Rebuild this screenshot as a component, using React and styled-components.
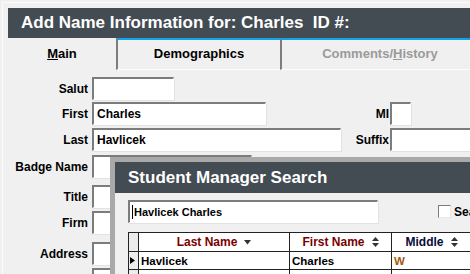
import React from "react";
import styled, { createGlobalStyle } from "styled-components";

const GlobalStyle = createGlobalStyle`
  html, body { margin: 0; padding: 0; background: #f0f0f0; overflow: hidden; }
  * { box-sizing: border-box; }
`;

const FONT = `"Liberation Sans", Arial, sans-serif`;

const Frame = styled.div`
  position: relative;
  width: 470px;
  height: 274px;
  overflow: hidden;
  background: #f0f0f0;
  padding: 8px 0 0 8px;
  font-family: ${FONT};
  box-shadow: inset 2px 2px 0 #f0f0f0, inset 3px 3px 0 #fbfbfb;
`;

const Window = styled.div`
  display: flex;
  flex-direction: column;
  width: 470px;
`;

const TitleBar = styled.div`
  display: flex;
  align-items: center;
  flex-shrink: 0;
  height: ${(p) => p.$h}px;
  padding-left: ${(p) => p.$pad}px;
  background: #434b53;
  color: #fff;
  font-weight: bold;
  font-size: 17px;
  white-space: pre;
`;

const TabStrip = styled.div`
  display: flex;
  height: 32px;
`;

const Tab = styled.div`
  display: flex;
  align-items: center;
  justify-content: center;
  flex-shrink: 0;
  width: ${(p) => p.$w}px;
  font-size: 13px;
  font-weight: bold;
  color: ${(p) => (p.$dim ? "#9a9a9a" : "#000")};
  border-top: 2px solid ${(p) => (p.$active ? "transparent" : "#12a3e8")};
  border-left: ${(p) => (p.$active ? "0" : "2px solid #7d7d7d")};
  border-bottom: 1px solid ${(p) => (p.$active ? "transparent" : "#fdfdfd")};
  padding-bottom: 2px;
  u { text-decoration: underline; }
`;

const FormBody = styled.div`
  display: flex;
  flex-direction: column;
  padding-top: 7px;
`;

const FieldRow = styled.div`
  display: flex;
  align-items: center;
  height: 23px;
  margin-top: ${(p) => p.$mt}px;
`;

const Label = styled.div`
  flex-shrink: 0;
  width: ${(p) => p.$w}px;
  padding-right: ${(p) => p.$pr}px;
  text-align: right;
  font-size: 12px;
  font-weight: bold;
  color: #000;
  white-space: nowrap;
`;

const Input = styled.div`
  flex-shrink: 0;
  width: ${(p) => p.$w}px;
  height: 23px;
  background: #fff;
  border-style: solid;
  border-width: 2px 1px 1px 2px;
  border-color: #7c7c7c #ffffff #ffffff #7c7c7c;
  box-shadow: 1px 1px 0 #e2e2e2;
  font-size: 12px;
  font-weight: bold;
  padding-left: 3px;
  display: flex;
  align-items: center;
  white-space: nowrap;
  overflow: hidden;
`;

const Dialog = styled.div`
  position: absolute;
  left: 110px;
  top: 157px;
  width: 400px;
  height: 130px;
  background: #f0f0f0;
  border-left: 5px solid #a9a9a9;
  border-top: 5px solid #a9a9a9;
  display: flex;
  flex-direction: column;
`;

const DialogBody = styled.div`
  display: flex;
  flex-direction: column;
  align-items: flex-start;
  padding: 7px 0 0 13px;
`;

const SearchRow = styled.div`
  display: flex;
  align-items: center;
  height: 23px;
`;

const SearchBox = styled(Input)`
  width: 250px;
  padding-left: 2px;
  font-size: 11px;
`;

const Caret = styled.span`
  display: inline-block;
  width: 1px;
  height: 14px;
  background: #000;
  margin-right: 1px;
`;

const CheckBox = styled.div`
  flex-shrink: 0;
  width: 13px;
  height: 13px;
  margin-left: 60px;
  background: #fff;
  border-style: solid;
  border-width: 1px;
  border-color: #7c7c7c #e8e8e8 #e8e8e8 #7c7c7c;
`;

const CheckText = styled.span`
  flex-shrink: 0;
  margin-left: 3px;
  font-size: 12px;
  font-weight: bold;
  white-space: nowrap;
`;

const Grid = styled.table`
  margin-top: 9px;
  border-collapse: collapse;
  table-layout: fixed;
  width: 420px;
  flex-shrink: 0;
  background: #fff;
`;

const HeadCell = styled.th`
  width: ${(p) => p.$w}px;
  height: 19px;
  padding: 0;
  border: 1px solid #222;
  font-size: 12px;
  font-weight: bold;
  color: ${(p) => p.$color || "#7a0000"};
  text-align: center;
  white-space: nowrap;
  background: ${(p) => (p.$gutter ? "#ececec" : "#fff")};
`;

const Cell = styled.td`
  height: 18px;
  padding: 0 0 0 2px;
  border: 1px solid #222;
  font-size: 11.5px;
  font-weight: bold;
  color: ${(p) => p.$color || "#000"};
  white-space: nowrap;
  overflow: hidden;
  background: ${(p) => (p.$gutter ? "#ececec" : "#fff")};
`;

const HeadInner = styled.span`
  display: inline-flex;
  align-items: center;
  gap: 7px;
`;

const SortDown = () => (
  <svg width="7" height="5" viewBox="0 0 7 5">
    <path d="M0 0 L7 0 L3.5 4.5 Z" fill="#333" />
  </svg>
);

const SortBoth = () => (
  <svg width="7" height="10" viewBox="0 0 7 10">
    <path d="M0 4 L7 4 L3.5 0 Z M0 6 L7 6 L3.5 10 Z" fill="#333" />
  </svg>
);

const RowMark = () => (
  <svg width="5" height="7" viewBox="0 0 5 7" style={{ display: "block", marginLeft: 1 }}>
    <path d="M0 0 L5 3.5 L0 7 Z" fill="#000" />
  </svg>
);

export default function App() {
  return (
    <>
      <GlobalStyle />
      <Frame>
        <Window>
          <TitleBar $h={30} $pad={13}>
            {"Add Name Information for: Charles  ID #:"}
          </TitleBar>
          <TabStrip>
            <Tab $w={108} $active>
              <span><u>M</u>ain</span>
            </Tab>
            <Tab $w={164}>Demographics</Tab>
            <Tab $w={198} $dim>
              <span>Comments/<u>H</u>istory</span>
            </Tab>
          </TabStrip>
          <FormBody>
            <FieldRow $mt={0}>
              <Label $w={84} $pr={4}>Salut</Label>
              <Input $w={82} />
            </FieldRow>
            <FieldRow $mt={2}>
              <Label $w={84} $pr={4}>First</Label>
              <Input $w={174}>Charles</Input>
              <Label $w={124} $pr={1}>MI</Label>
              <Input $w={21} />
            </FieldRow>
            <FieldRow $mt={3}>
              <Label $w={84} $pr={4}>Last</Label>
              <Input $w={249}>Havlicek</Input>
              <Label $w={49} $pr={1}>Suffix</Label>
              <Input $w={100} />
            </FieldRow>
            <FieldRow $mt={4}>
              <Label $w={84} $pr={4}>Badge Name</Label>
              <Input $w={160} />
            </FieldRow>
            <FieldRow $mt={7}>
              <Label $w={84} $pr={4}>Title</Label>
              <Input $w={160} />
            </FieldRow>
            <FieldRow $mt={3}>
              <Label $w={84} $pr={4}>Firm</Label>
              <Input $w={160} />
            </FieldRow>
            <FieldRow $mt={8}>
              <Label $w={84} $pr={4}>Address</Label>
              <Input $w={160} />
            </FieldRow>
            <FieldRow $mt={3}>
              <Label $w={84} $pr={4}></Label>
              <Input $w={160} />
            </FieldRow>
          </FormBody>
        </Window>

        <Dialog>
          <TitleBar $h={31} $pad={13}>Student Manager Search</TitleBar>
          <DialogBody>
            <SearchRow>
              <SearchBox>
                <Caret />
                Havlicek Charles
              </SearchBox>
              <CheckBox />
              <CheckText>Search All</CheckText>
            </SearchRow>
            <Grid>
              <thead>
                <tr>
                  <HeadCell $w={10} $gutter />
                  <HeadCell $w={151}>
                    <HeadInner>Last Name <SortDown /></HeadInner>
                  </HeadCell>
                  <HeadCell $w={102}>
                    <HeadInner>First Name <SortBoth /></HeadInner>
                  </HeadCell>
                  <HeadCell $w={80} $color="#0a0a3a">
                    <HeadInner>Middle <SortBoth /></HeadInner>
                  </HeadCell>
                  <HeadCell $w={77} />
                </tr>
              </thead>
              <tbody>
                <tr>
                  <Cell $gutter style={{ padding: 0 }}>
                    <RowMark />
                  </Cell>
                  <Cell>Havlicek</Cell>
                  <Cell>Charles</Cell>
                  <Cell $color="#a35a10">W</Cell>
                  <Cell />
                </tr>
                <tr>
                  <Cell $gutter />
                  <Cell />
                  <Cell />
                  <Cell />
                  <Cell />
                </tr>
              </tbody>
            </Grid>
          </DialogBody>
        </Dialog>
      </Frame>
    </>
  );
}
